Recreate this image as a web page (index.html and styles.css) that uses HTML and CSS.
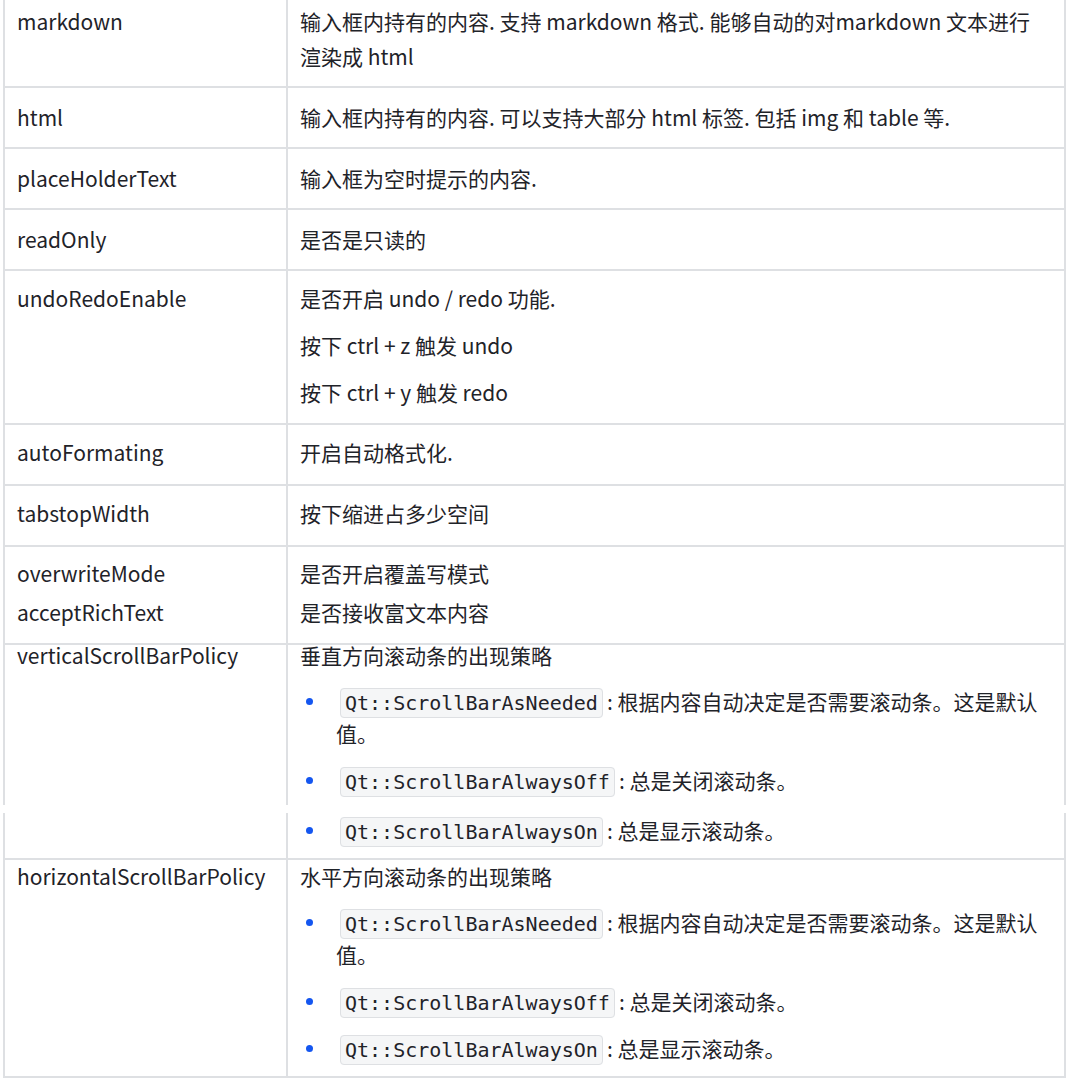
FILE: index.html
```html
<!DOCTYPE html>
<html lang="zh-CN">
<head>
  <meta charset="UTF-8" />
  <meta name="viewport" content="width=device-width, initial-scale=1.0"/>
  <title>QMarkdownTextEdit 属性</title>
  <link rel="stylesheet" href="styles.css">
</head>
<body>

  <div class="doc-table">
    <div class="row">
      <div class="cell key">markdown</div>
      <div class="cell">输入框内持有的内容. 支持 markdown 格式. 能够自动的对markdown 文本进行渲染成 html</div>
    </div>
    <div class="row">
      <div class="cell key">html</div>
      <div class="cell">输入框内持有的内容. 可以支持大部分 html 标签. 包括 img 和 table 等.</div>
    </div>
    <div class="row">
      <div class="cell key">placeHolderText</div>
      <div class="cell">输入框为空时提示的内容.</div>
    </div>
    <div class="row">
      <div class="cell key">readOnly</div>
      <div class="cell">是否是只读的</div>
    </div>
    <div class="row multi">
      <div class="cell key">undoRedoEnable</div>
      <div class="cell">
        <p>是否开启 undo / redo 功能.</p>
        <p>按下 ctrl + z 触发 undo</p>
        <p>按下 ctrl + y 触发 redo</p>
      </div>
    </div>
    <div class="row snug">
      <div class="cell key">autoFormating</div>
      <div class="cell">开启自动格式化.</div>
    </div>
    <div class="row snug">
      <div class="cell key">tabstopWidth</div>
      <div class="cell">按下缩进占多少空间</div>
    </div>
    <div class="row pair">
      <div class="cell key">
        <p>overwriteMode</p>
        <p>acceptRichText</p>
      </div>
      <div class="cell">
        <p>是否开启覆盖写模式</p>
        <p>是否接收富文本内容</p>
      </div>
    </div>

    <!-- 这一行在截图里被拼接过, 中间断开 -->
    <div class="row policy cut-top open-bottom">
      <div class="cell key"><p class="first">verticalScrollBarPolicy</p></div>
      <div class="cell">
        <p class="first">垂直方向滚动条的出现策略</p>
        <ul class="opts">
          <li><code>Qt::ScrollBarAsNeeded</code>: 根据内容自动决定是否需要滚动条。这是默认值。</li>
          <li><code>Qt::ScrollBarAlwaysOff</code>: 总是关闭滚动条。</li>
        </ul>
      </div>
    </div>
    <div class="seam"></div>
    <div class="row rest">
      <div class="cell key"></div>
      <div class="cell">
        <ul class="opts">
          <li><code>Qt::ScrollBarAlwaysOn</code>: 总是显示滚动条。</li>
        </ul>
      </div>
    </div>

    <div class="row policy">
      <div class="cell key"><p class="first">horizontalScrollBarPolicy</p></div>
      <div class="cell">
        <p class="first">水平方向滚动条的出现策略</p>
        <ul class="opts">
          <li><code>Qt::ScrollBarAsNeeded</code>: 根据内容自动决定是否需要滚动条。这是默认值。</li>
          <li><code>Qt::ScrollBarAlwaysOff</code>: 总是关闭滚动条。</li>
          <li><code>Qt::ScrollBarAlwaysOn</code>: 总是显示滚动条。</li>
        </ul>
      </div>
    </div>
  </div>

</body>
</html>
```

FILE: styles.css
```css
* {
  box-sizing: border-box;
}

body {
  margin: 0;
  padding: 0;
  background: #ffffff;
  font-family: "Noto Sans CJK SC", "Noto Sans", sans-serif;
  font-size: 21px;
  color: #1f2329;
}

.doc-table {
  width: 1063px;
  margin: -10px 0 0 3px;
  border-top: 2px solid #dee0e3;
}

.row {
  display: grid;
  grid-template-columns: 283px 1fr;
  border: 2px solid #dee0e3;
  border-top: 0;
  overflow: hidden;
}

.cell {
  padding: 12px 24px 12px 12px;
  line-height: 35px;
}

.key {
  padding-right: 12px;
  border-right: 2px solid #dee0e3;
}

.cell p {
  margin: 0;
}

.cell p + p {
  margin-top: 12px;
}

.multi .cell {
  padding-top: 10px;
  padding-bottom: 13px;
}

.snug .cell {
  padding-top: 10px;
  padding-bottom: 14px;
}

/* two lines in one cell */
.pair .cell {
  padding-top: 9px;
  padding-bottom: 13px;
}

.pair .cell p + p {
  margin-top: 4px;
}

/* ScrollBarPolicy rows */
.policy .cell {
  padding-top: 0;
}

.first {
  line-height: 32px;
}

.cut-top .first {
  margin-top: -6px;
}

.open-bottom {
  border-bottom: 0;
}

.open-bottom .cell {
  padding-bottom: 9px;
}

.seam {
  height: 8px;
}

.rest .cell {
  padding-top: 1px;
}

.opts {
  list-style: none;
  margin: 14px 0 0;
  padding: 0;
}

.rest .opts {
  margin-top: 0;
}

.opts li {
  position: relative;
  padding-left: 36px;
  line-height: 32px;
}

.opts li + li {
  margin-top: 15px;
}

.opts li::before {
  content: "";
  position: absolute;
  left: 6px;
  top: 13px;
  width: 7px;
  height: 7px;
  border-radius: 50%;
  background: #1456f0;
}

code {
  font-family: "DejaVu Sans Mono", monospace;
  font-size: 20px;
  line-height: 20px;
  background: #f5f6f7;
  border: 1px solid #dee0e3;
  border-radius: 4px;
  padding: 2px 4px;
  margin: 0 4px;
}
```
